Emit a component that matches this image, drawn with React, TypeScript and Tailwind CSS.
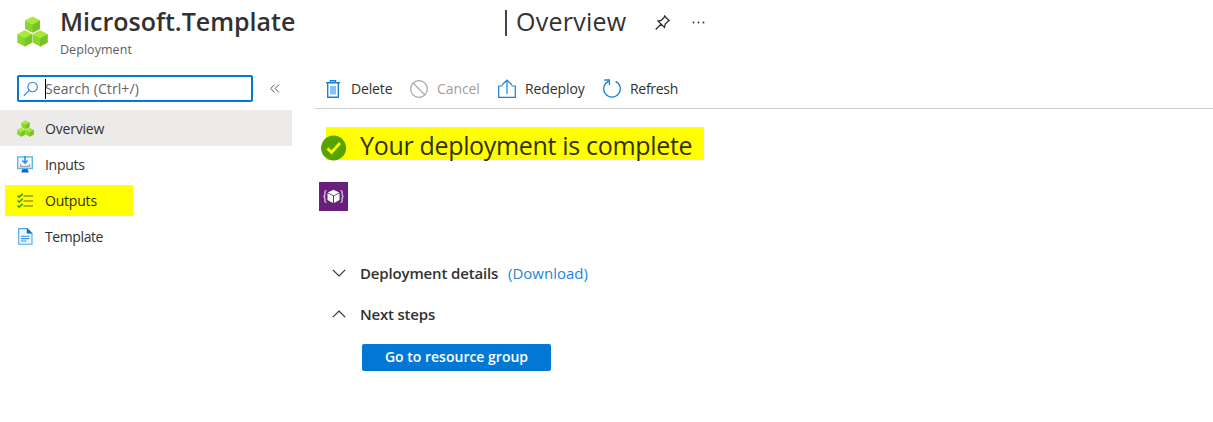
import React from 'react';

function Cube({ x, y }: { x: number; y: number }) {
  return (
    <g transform={`translate(${x} ${y})`}>
      <path d="M0 3.700 7.200 7.400 14.400 3.700V12L7.200 15.800 0 12Z" fill="#8bd52f" />
      <path d="M14.400 3.700 7.200 7.400v8.400l7.200-3.800Z" fill="#76c425" />
      <path d="M7.200 0 14.400 3.700 7.200 7.600 0 3.700Z" fill="#abe63b" />
    </g>
  );
}

function Cubes({ className }: { className: string }) {
  return (
    <svg className={className} viewBox="0 0 30 30">
      <Cube x={7.8} y={0.5} />
      <Cube x={0.3} y={13.700} />
      <Cube x={15.200} y={13.700} />
    </svg>
  );
}

function InputsIcon() {
  return (
    <svg className="h-[17px] w-4" viewBox="0 0 16 17">
      <path d="M5.500 12.500h5l1.300 4h-7.600z" fill="#1668bd" />
      <rect x=".7" y=".9" width="14.600" height="11.600" fill="#f1f8fd" stroke="#5eb5f2" strokeWidth="1.400" />
      <path d="M3.500 8v2.500h9V8" fill="none" stroke="#a5a5a5" strokeWidth="1.300" />
      <path d="M8 0v6.500M5.400 4.500 8 7.200l2.600-2.700" fill="none" stroke="#2492e8" strokeWidth="1.600" />
    </svg>
  );
}

function OutputsIcon() {
  return (
    <svg className="h-4 w-4" viewBox="0 0 16 16" fill="none">
      <path d="M6.500 3H16M6.500 8H16M6.500 13H16" stroke="#9b981a" strokeWidth="1.300" />
      <path d="m.6 2.600 1.600 1.500L5.700.9M.6 7.600l1.600 1.500 3.500-3.200M.6 12.600l1.600 1.500 3.500-3.200" stroke="#339b00" strokeWidth="1.500" />
    </svg>
  );
}

function TemplateIcon() {
  return (
    <svg className="ml-px h-[17px] w-[15px]" viewBox="0 0 15 17">
      <path d="M.7.600h8.600l4.700 4.700v11H.7z" fill="#e9f5fd" stroke="#55a5e4" strokeWidth="1.100" />
      <path d="M8.800.100v5.500h5.600z" fill="#0f6cbd" />
      <path d="M3 8.200h8.500M3 10.600h8.500M3 13h5.500" stroke="#3d97df" strokeWidth="1.100" />
    </svg>
  );
}

function NavItem({ icon, label, className, textClass }: { icon: React.ReactNode; label: string; className?: string; textClass: string }) {
  return (
    <li className={`flex h-9 items-center pl-[17px] ${className ?? ''}`}>
      <span className="flex w-7 shrink-0">{icon}</span>
      <span className={textClass}>{label}</span>
    </li>
  );
}

function Sidebar() {
  return (
    <aside className="w-[292px] shrink-0 pt-[6px]">
      <div className="flex items-center">
        <div className="ml-[17px] flex h-[27px] w-[236px] items-center rounded-[2px] border-2 border-[#0078d4] pl-1">
          <svg className="h-4 w-4" viewBox="0 0 16 16" fill="none" stroke="#2586d8" strokeWidth="1.100">
            <circle cx="9.600" cy="6" r="4.700" />
            <path d="M6.200 9.400.800 14.800" />
          </svg>
          <span className="ml-[6px] h-5 w-px bg-black" />
          <span className="-ml-px text-[14px] tracking-[0.100px] text-[#65635f]">Search (Ctrl+/)</span>
        </div>
        <svg className="ml-[17px] h-[9px] w-[10px]" viewBox="0 0 10 9" fill="none" stroke="#555" strokeWidth="1">
          <path d="M4.600.500.700 4.500l3.900 4M9 .500 5.100 4.500 9 8.500" />
        </svg>
      </div>
      <ul className="mt-2 text-[14px] text-[#323130]">
        <NavItem icon={<Cubes className="h-[17px] w-[17px]" />} label="Overview" textClass="tracking-[-0.2px]" className="bg-[#edebe9]" />
        <NavItem icon={<InputsIcon />} label="Inputs" textClass="tracking-[-0.3px]" />
        <li className="flex h-9 items-center pl-[5px]">
          <span className="mt-px flex h-[31px] w-[128px] items-center bg-[#ffff00] pl-3">
            <span className="flex w-7 shrink-0"><OutputsIcon /></span>
            <span className="-mt-px tracking-[-0.2px] text-[#323100]">Outputs</span>
          </span>
        </li>
        <NavItem icon={<TemplateIcon />} label="Template" textClass="tracking-[-0.4px]" />
      </ul>
    </aside>
  );
}

function Toolbar() {
  return (
    <div className="flex h-[40px] items-center border-b border-[#d0cfcd] pl-2 text-[14px] text-[#323130]">
      <div className="flex w-[87px] items-center">
        <svg className="mx-[3px] h-[18px] w-[14px]" viewBox="0 0 14 18" fill="none" stroke="#1683d9" strokeWidth="1.400">
          <path d="M0 2.700h14M4.500 2.500V.700h5v1.800M1.700 3v14.300h10.600V3" />
          <path d="M5 6v8.500M7 6v8.500M9 6v8.500" strokeWidth="1" />
        </svg>
        <span className="ml-[8px] tracking-[-0.15px]">Delete</span>
      </div>
      <div className="flex w-[88px] items-center text-[#a19f9d]">
        <svg className="h-[18px] w-[18px]" viewBox="0 0 18 18" fill="none" stroke="#a3a19f" strokeWidth="1.200">
          <circle cx="9" cy="9" r="8.300" />
          <path d="m3.200 3.200 11.600 11.600" />
        </svg>
        <span className="ml-[9px] tracking-[-0.1px]">Cancel</span>
      </div>
      <div className="flex w-[105px] items-center">
        <svg className="h-[19px] w-[18px]" viewBox="0 0 18 19" fill="none" stroke="#1683d9" strokeWidth="1.200">
          <path d="M4.500 7H.7v11.300h16.600V7h-3.800M9 15V1M4 6l5-5 5 5" />
        </svg>
        <span className="ml-[9px] tracking-[-0.1px]">Redeploy</span>
      </div>
      <div className="flex items-center">
        <svg className="h-[19px] w-[18px]" viewBox="0 0 18 19" fill="none" stroke="#1683d9" strokeWidth="1.300">
          <path d="M12.500 2.300A8.300 8.300 0 1 1 5.500 2.300M1.400 1h5v5" />
        </svg>
        <span className="ml-[9px] tracking-[-0.3px]">Refresh</span>
      </div>
    </div>
  );
}

function DeploymentStatus() {
  return (
    <div className="flex h-[53px] pt-[18px] pl-[6px]">
      <svg className="z-10 mt-[8px] h-[26px] w-[26px] shrink-0" viewBox="0 0 26 26">
        <circle cx="12.600" cy="13" r="12.500" fill="#57a300" />
        <path d="m6.500 13.500 4 4 8.500-9.500" fill="none" stroke="#ffff00" strokeWidth="2.700" />
      </svg>
      <h2 className="-ml-[21px] flex h-[33px] w-[378px] items-center bg-[#ffff00] pl-[34px] pt-[5px] text-[25px] tracking-[-0.32px] whitespace-nowrap text-[#323100]">
        Your deployment is complete
      </h2>
    </div>
  );
}

function Chevron({ up }: { up?: boolean }) {
  return (
    <svg className="mr-[14px] h-2 w-[14px]" viewBox="0 0 14 8" fill="none" stroke="#323130" strokeWidth="1.200">
      <path d={up ? 'M.8 7.200 7 1l6.200 6.200' : 'M.8.800 7 7 13.200.800'} />
    </svg>
  );
}

export default function App() {
  return (
    <div className="h-[422px] w-[1213px] overflow-hidden bg-white font-['Open_Sans',sans-serif]">
      <header className="flex h-[69px]">
        <Cubes className="mt-[16px] ml-[17px] h-[31px] w-[31px] shrink-0" />
        <div className="ml-[12px] w-[443px]">
          <h1 className="mt-[3px] text-[25px] leading-9 font-semibold text-[#323130]">Microsoft.Template</h1>
          <p className="mt-[2px] text-[12.500px] leading-[18px] tracking-[0.050px] text-[#605e5c]">Deployment</p>
        </div>
        <span className="mt-[10px] ml-[2px] h-[26px] w-[2px] bg-[#46405a]" />
        <span className="mt-[3px] ml-[9px] w-[127px] text-[25px] leading-9 tracking-[0.250px] text-[#323130]">Overview</span>
        <svg className="mt-[15px] ml-[12px] h-[15px] w-[15px]" viewBox="0 0 15 15" fill="none" stroke="#323130" strokeWidth="1.300">
          <path d="m9.500 1 4.700 4.700-1.100.500-2.900 2.900-.700 3.400L3 6l3.400-.700L9.300 2.300zM6 9.200.700 14.500" />
        </svg>
        <svg className="mt-[21px] ml-[22px] h-[3px] w-[13px]" viewBox="0 0 13 3" fill="#323130">
          <circle cx="1.500" cy="1.500" r=".9" /><circle cx="6.500" cy="1.500" r=".9" /><circle cx="11.500" cy="1.500" r=".9" />
        </svg>
      </header>
      <div className="flex">
        <Sidebar />
        <main className="ml-[23px] flex-1">
          <Toolbar />
          <DeploymentStatus />
          <svg className="mt-[20px] ml-[4px] h-[29px] w-[29px]" viewBox="0 0 29 29">
            <path fill="#68217a" d="M0 0h29v29H0z" />
            <path d="M14.500 7.700 20.300 10.400l-5.800 3L8.700 10.400z" fill="#fff" />
            <path d="m8.500 11.200 5.500 2.900v7l-5.500-3zM20.500 11.200 15 14.100v7l5.500-3z" fill="#fff" />
            <path d="M7.500 8.500q-1.800 0-1.600 2v2q0 1.800-1.400 2 1.400.2 1.400 2v2q-.2 2 1.600 2M21.500 8.500q1.800 0 1.600 2v2q0 1.800 1.400 2-1.400.2-1.400 2v2q.2 2-1.600 2" fill="none" stroke="#e6d5ea" strokeWidth="1.200" />
          </svg>
          <div className="mt-[50px] flex h-6 items-center pl-[17px] text-[15px] text-[#323130]">
            <Chevron />
            <span className="w-[148px] font-semibold tracking-[-0.150px] whitespace-nowrap">Deployment details</span>
            <a className="text-[#2586d8]">(Download)</a>
          </div>
          <div className="mt-[17px] flex h-6 items-center pl-[17px] text-[15px] text-[#323130]">
            <Chevron up />
            <span className="font-semibold tracking-[-0.200px]">Next steps</span>
          </div>
          <button className="mt-[18px] ml-[47px] block h-[27px] w-[189px] rounded-[2px] bg-[#0078d4] pb-[2px] text-[14px] font-semibold text-white">
            Go to resource group
          </button>
        </main>
      </div>
    </div>
  );
}
